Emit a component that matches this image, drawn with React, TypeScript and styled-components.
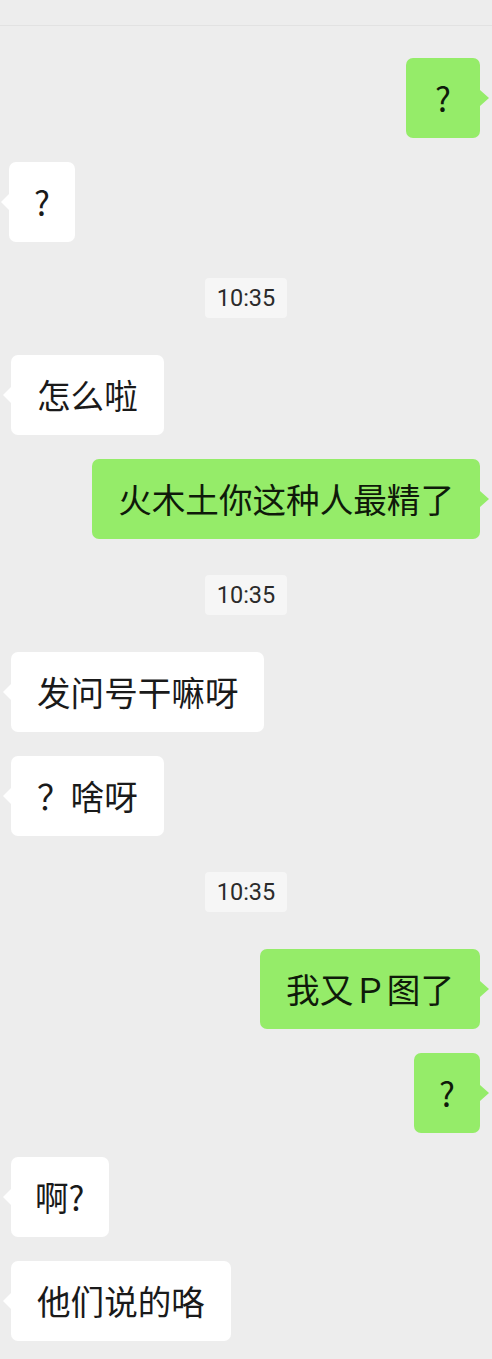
import React from "react";
import styled, { createGlobalStyle, css } from "styled-components";

const Global = createGlobalStyle`
  html, body { margin: 0; padding: 0; background: #ededed; }
  body { font-family: "Noto Sans CJK SC", "Noto Sans", sans-serif; }
`;

const Page = styled.div`
  width: 492px;
  min-height: 1359px;
  background: #ededed;
  box-sizing: border-box;
`;

const TopBar = styled.div`
  height: 25px;
  border-bottom: 1px solid #e2e2e2;
`;

const Feed = styled.div`
  display: flex;
  flex-direction: column;
  gap: 24px;
  padding: 32px 12px 19px 11px;
`;

const Row = styled.div<{ $mine?: boolean }>`
  display: flex;
  justify-content: ${(p) => (p.$mine ? "flex-end" : "flex-start")};
`;

const TimeRow = styled.div`
  display: flex;
  justify-content: center;
  margin: 12px 0 13px;
`;

const Time = styled.div`
  height: 40px;
  width: 82px;
  display: flex;
  align-items: center;
  justify-content: center;
  background: #f6f6f6;
  border-radius: 4px;
  font-family: Roboto, "Noto Sans", sans-serif;
  font-size: 23.5px;
  color: #2b2b2b;
  margin-left: 1px;
`;

const Bubble = styled.div<{ $mine?: boolean; $pad?: number; $shift?: number }>`
  position: relative;
  height: 80px;
  box-sizing: border-box;
  display: flex;
  align-items: center;
  padding: 0 ${(p) => p.$pad ?? 26}px;
  border-radius: 7px;
  font-size: 33.6px;
  line-height: 1;
  white-space: nowrap;
  margin-left: ${(p) => p.$shift ?? 0}px;
  ${(p) =>
    p.$mine
      ? css`
          background: #95ec69;
          color: #0f1a0a;
        `
      : css`
          background: #ffffff;
          color: #1a1a1a;
        `}

  &::after {
    content: "";
    position: absolute;
    top: 50%;
    width: 0;
    height: 0;
    border-top: 8px solid transparent;
    border-bottom: 8px solid transparent;
    transform: translateY(-50%);
    ${(p) =>
      p.$mine
        ? css`
            right: -9px;
            border-left: 9px solid #95ec69;
          `
        : css`
            left: -8px;
            border-right: 8px solid #ffffff;
          `}
  }
`;

type Item =
  | { kind: "time"; text: string }
  | { kind: "msg"; mine: boolean; text: string; pad?: number; shift?: number };

const items: Item[] = [
  { kind: "msg", mine: true, text: "?", pad: 29 },
  { kind: "msg", mine: false, text: "?", pad: 25, shift: -2 },
  { kind: "time", text: "10:35" },
  { kind: "msg", mine: false, text: "怎么啦" },
  { kind: "msg", mine: true, text: "火木土你这种人最精了" },
  { kind: "time", text: "10:35" },
  { kind: "msg", mine: false, text: "发问号干嘛呀" },
  { kind: "msg", mine: false, text: "？啥呀" },
  { kind: "time", text: "10:35" },
  { kind: "msg", mine: true, text: "我又Ｐ图了" },
  { kind: "msg", mine: true, text: "?", pad: 25 },
  { kind: "msg", mine: false, text: "啊?", pad: 24 },
  { kind: "msg", mine: false, text: "他们说的咯" },
];

export default function App() {
  return (
    <Page>
      <Global />
      <TopBar />
      <Feed>
        {items.map((it, i) =>
          it.kind === "time" ? (
            <TimeRow key={i}>
              <Time>{it.text}</Time>
            </TimeRow>
          ) : (
            <Row key={i} $mine={it.mine}>
              <Bubble $mine={it.mine} $pad={it.pad} $shift={it.shift}>
                {it.text}
              </Bubble>
            </Row>
          )
        )}
      </Feed>
    </Page>
  );
}
